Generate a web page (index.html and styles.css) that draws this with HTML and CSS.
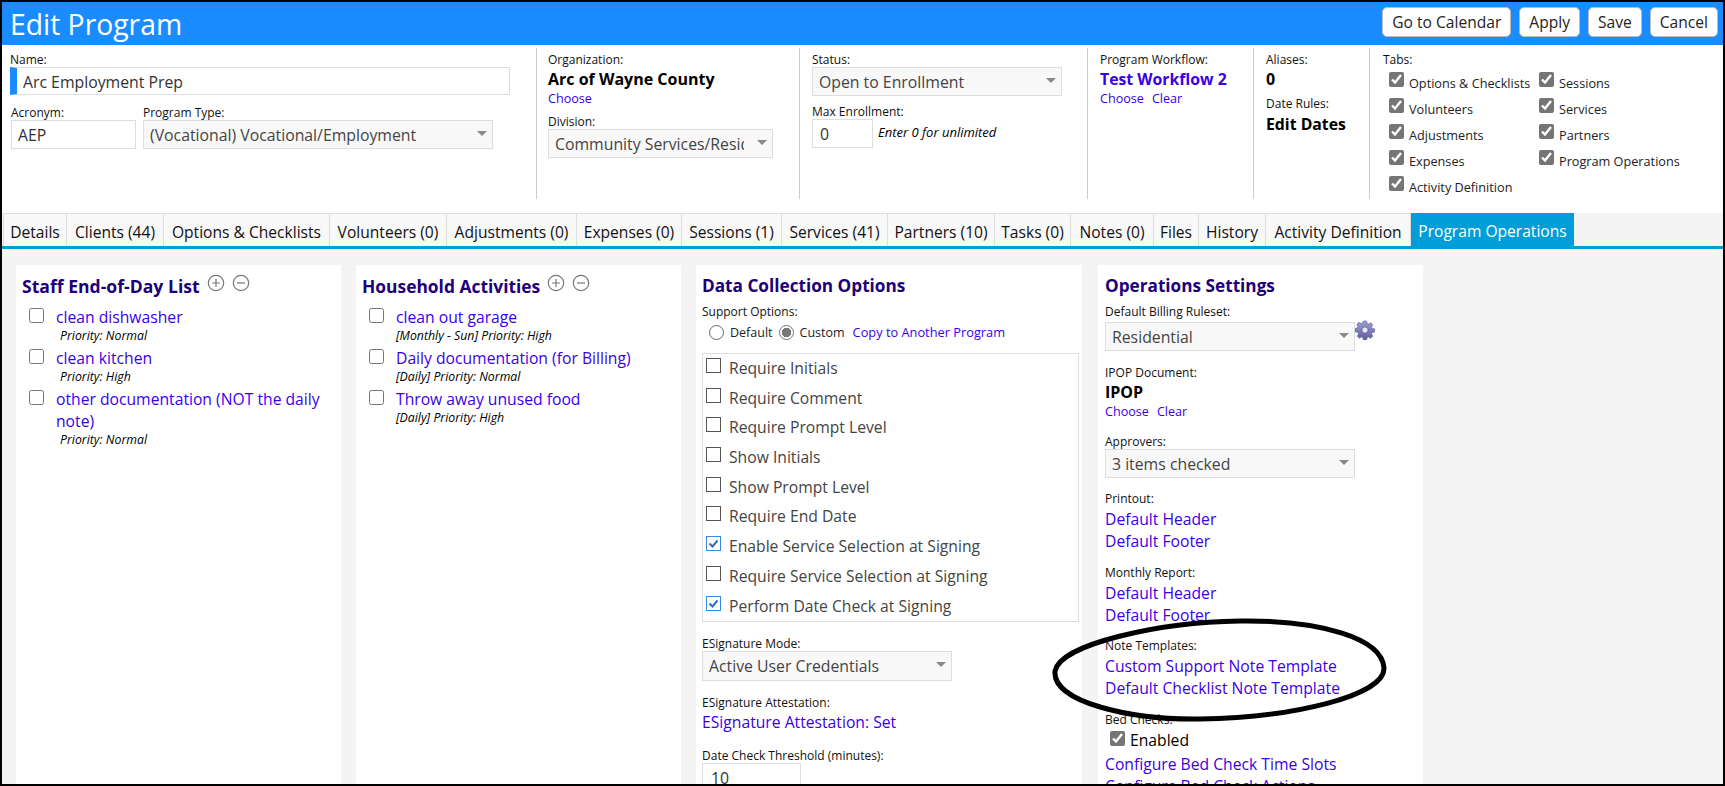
FILE: index.html
```html
<!DOCTYPE html>
<html lang="en">
<head>
    <meta charset="UTF-8">
    <title>Edit Program</title>
    <link rel="stylesheet" href="styles.css">
</head>
<body>
    <div class="frame">
        <div class="titlebar">
            <h1>Edit Program</h1>
            <div class="actions">
                <button>Go to Calendar</button>
                <button>Apply</button>
                <button>Save</button>
                <button>Cancel</button>
            </div>
        </div>

        <div class="form-top">
            <div class="col col-name">
                <label>Name:</label>
                <input type="text" class="input name-input" value="Arc Employment Prep">
                <div class="name-row">
                    <div>
                        <label>Acronym:</label>
                        <input type="text" class="input acronym-input" value="AEP">
                    </div>
                    <div>
                        <label>Program Type:</label>
                        <div class="select type-select"><select><option>(Vocational) Vocational/Employment</option></select></div>
                    </div>
                </div>
            </div>
            <div class="col col-org">
                <label>Organization:</label>
                <div class="strong">Arc of Wayne County</div>
                <div class="small-links"><a>Choose</a></div>
                <label class="mt8">Division:</label>
                <div class="select division-select"><select><option>Community Services/Residential</option></select></div>
            </div>
            <div class="col col-status">
                <label>Status:</label>
                <div class="select status-select"><select><option>Open to Enrollment</option></select></div>
                <label class="mt9">Max Enrollment:</label>
                <div class="enroll-row">
                    <input type="text" class="input enroll-input" value="0">
                    <em>Enter 0 for unlimited</em>
                </div>
            </div>
            <div class="col col-workflow">
                <label>Program Workflow:</label>
                <div class="strong link-strong">Test Workflow 2</div>
                <div class="small-links"><a>Choose</a><a>Clear</a></div>
            </div>
            <div class="col col-alias">
                <label>Aliases:</label>
                <div class="strong">0</div>
                <label class="mt7">Date Rules:</label>
                <div class="strong edit-dates">Edit Dates</div>
            </div>
            <div class="col col-tabs">
                <label>Tabs:</label>
                <div class="tab-checks">
                    <div class="tab-check"><input type="checkbox" checked><span>Options &amp; Checklists</span></div>
                    <div class="tab-check"><input type="checkbox" checked><span>Sessions</span></div>
                    <div class="tab-check"><input type="checkbox" checked><span>Volunteers</span></div>
                    <div class="tab-check"><input type="checkbox" checked><span>Services</span></div>
                    <div class="tab-check"><input type="checkbox" checked><span>Adjustments</span></div>
                    <div class="tab-check"><input type="checkbox" checked><span>Partners</span></div>
                    <div class="tab-check"><input type="checkbox" checked><span>Expenses</span></div>
                    <div class="tab-check"><input type="checkbox" checked><span>Program Operations</span></div>
                    <div class="tab-check"><input type="checkbox" checked><span>Activity Definition</span></div>
                </div>
            </div>
        </div>

        <div class="tabs">
            <a class="tab w-details">Details</a>
            <a class="tab w-clients">Clients (44)</a>
            <a class="tab w-options">Options &amp; Checklists</a>
            <a class="tab w-volunteers">Volunteers (0)</a>
            <a class="tab w-adjust">Adjustments (0)</a>
            <a class="tab w-expenses">Expenses (0)</a>
            <a class="tab w-sessions">Sessions (1)</a>
            <a class="tab w-services">Services (41)</a>
            <a class="tab w-partners">Partners (10)</a>
            <a class="tab w-tasks">Tasks (0)</a>
            <a class="tab w-notes">Notes (0)</a>
            <a class="tab w-files">Files</a>
            <a class="tab w-history">History</a>
            <a class="tab w-activity">Activity Definition</a>
            <a class="tab tab-active">Program Operations</a>
        </div>

        <div class="content">
            <div class="panel panel-list">
                <h2>Staff End-of-Day List
                    <svg class="round-icon" viewBox="0 0 18 18"><circle cx="9" cy="9" r="7.7"/><path d="M9 5v8M5 9h8"/></svg>
                    <svg class="round-icon" viewBox="0 0 18 18"><circle cx="9" cy="9" r="7.7"/><path d="M5 9h8"/></svg>
                </h2>
                <ul class="todo">
                    <li><input type="checkbox"><div><a>clean dishwasher</a><p class="indent">Priority: Normal</p></div></li>
                    <li><input type="checkbox"><div><a>clean kitchen</a><p class="indent">Priority: High</p></div></li>
                    <li><input type="checkbox"><div><a>other documentation (NOT the daily note)</a><p class="indent">Priority: Normal</p></div></li>
                </ul>
            </div>
            <div class="panel panel-list">
                <h2 class="household">Household Activities
                    <svg class="round-icon" viewBox="0 0 18 18"><circle cx="9" cy="9" r="7.7"/><path d="M9 5v8M5 9h8"/></svg>
                    <svg class="round-icon" viewBox="0 0 18 18"><circle cx="9" cy="9" r="7.7"/><path d="M5 9h8"/></svg>
                </h2>
                <ul class="todo">
                    <li><input type="checkbox"><div><a>clean out garage</a><p>[Monthly - Sun] Priority: High</p></div></li>
                    <li><input type="checkbox"><div><a>Daily documentation (for Billing)</a><p>[Daily] Priority: Normal</p></div></li>
                    <li><input type="checkbox"><div><a>Throw away unused food</a><p>[Daily] Priority: High</p></div></li>
                </ul>
            </div>
            <div class="panel panel-data">
                <h2>Data Collection Options</h2>
                <label class="mt7">Support Options:</label>
                <div class="radio-row">
                    <span class="radio"></span><span>Default</span>
                    <span class="radio radio-on"></span><span>Custom</span>
                    <a>Copy to Another Program</a>
                </div>
                <div class="option-box">
                    <div class="option"><span class="square"></span>Require Initials</div>
                    <div class="option"><span class="square"></span>Require Comment</div>
                    <div class="option"><span class="square"></span>Require Prompt Level</div>
                    <div class="option"><span class="square"></span>Show Initials</div>
                    <div class="option"><span class="square"></span>Show Prompt Level</div>
                    <div class="option"><span class="square"></span>Require End Date</div>
                    <div class="option"><span class="square square-on"><svg viewBox="0 0 13 13"><path d="M2.5 6.5l3 3 5-6"/></svg></span>Enable Service Selection at Signing</div>
                    <div class="option"><span class="square"></span>Require Service Selection at Signing</div>
                    <div class="option"><span class="square square-on"><svg viewBox="0 0 13 13"><path d="M2.5 6.5l3 3 5-6"/></svg></span>Perform Date Check at Signing</div>
                </div>
                <label class="mt15">ESignature Mode:</label>
                <div class="select mode-select"><select><option>Active User Credentials</option></select></div>
                <label class="mt15">ESignature Attestation:</label>
                <a class="big-link mt1">ESignature Attestation: Set</a>
                <label class="mt16">Date Check Threshold (minutes):</label>
                <input type="text" class="input threshold-input" value="10">
            </div>
            <div class="panel panel-settings">
                <h2>Operations Settings</h2>
                <label class="mt7">Default Billing Ruleset:</label>
                <div class="billing-row">
                    <div class="select settings-select"><select><option>Residential</option></select></div>
                    <svg class="gear" viewBox="0 0 20 20">
                        <defs><linearGradient id="gearFill" x1="0" y1="0" x2="0" y2="1"><stop offset="0" stop-color="#9f9fd6"/><stop offset="1" stop-color="#5d5d9c"/></linearGradient></defs>
                        <path fill="url(#gearFill)" stroke="#55558f" stroke-width=".6" d="M8.4 1h3.2l.4 2.4 1.6.7 2-1.4 2.2 2.2-1.4 2 .7 1.6 2.4.4v3.2l-2.4.4-.7 1.6 1.4 2-2.2 2.2-2-1.4-1.6.7-.4 2.4H8.4l-.4-2.4-1.6-.7-2 1.4-2.2-2.2 1.4-2-.7-1.6L0 11.6V8.4l2.4-.4.7-1.6-1.4-2 2.2-2.2 2 1.4 1.6-.7z"/>
                        <circle cx="10" cy="10" r="3.2" fill="#e6e6f5" stroke="#55558f" stroke-width=".8"/>
                    </svg>
                </div>
                <label class="mt15">IPOP Document:</label>
                <div class="strong mt2">IPOP</div>
                <div class="small-links"><a>Choose</a><a>Clear</a></div>
                <label class="mt15">Approvers:</label>
                <div class="select settings-select"><select><option>3 items checked</option></select></div>
                <label class="mt14">Printout:</label>
                <a class="big-link mt2">Default Header</a>
                <a class="big-link">Default Footer</a>
                <label class="mt14">Monthly Report:</label>
                <a class="big-link mt2">Default Header</a>
                <a class="big-link">Default Footer</a>
                <label class="mt13">Note Templates:</label>
                <a class="big-link mt2">Custom Support Note Template</a>
                <a class="big-link">Default Checklist Note Template</a>
                <label class="mt14">Bed Checks:</label>
                <div class="enabled-row"><input type="checkbox" checked><span>Enabled</span></div>
                <a class="big-link mt2">Configure Bed Check Time Slots</a>
                <a class="big-link">Configure Bed Check Actions</a>
            </div>
        </div>

        <!-- hand drawn marker from the screenshot -->
        <svg class="marker" viewBox="0 0 340 110">
            <path d="M5 53C10 26 110 4 190 3C270 2 332 20 334 50C335 78 240 100 150 101C80 102 2 84 5 53Z"/>
        </svg>
    </div>
</body>
</html>
```

FILE: styles.css
```css
* {
    margin: 0;
    padding: 0;
    box-sizing: border-box;
}

body {
    font-family: 'Open Sans', 'Noto Sans', sans-serif;
    font-stretch: 90%;
    color: #000;
    background: #000;
}

.frame {
    position: relative;
    width: 1725px;
    height: 786px;
    border: 2px solid #000;
    overflow: hidden;
    background: #f4f4f4;
}

label {
    display: block;
    font-size: 12px;
    line-height: 14px;
    color: #111;
}

a {
    color: #3a00e8;
}

input[type="checkbox"] {
    accent-color: #757575;
}

.mt1 { margin-top: 1px; }
.mt2 { margin-top: 2px; }
.mt7 { margin-top: 7px; }
.mt8 { margin-top: 8px; }
.mt9 { margin-top: 9px; }
.mt13 { margin-top: 13px; }
.mt14 { margin-top: 14px; }
.mt15 { margin-top: 15px; }
.mt16 { margin-top: 16px; }

/* title */
.titlebar {
    height: 43px;
    background: #1a8cff;
    display: flex;
    justify-content: space-between;
    padding: 5px 5px 0 8px;
}

.titlebar h1 {
    font-size: 28.3px;
    line-height: 34px;
    font-weight: 400;
    color: #fff;
}

.actions {
    display: flex;
    gap: 8px;
}

.actions button {
    height: 30px;
    padding: 0 9px;
    font-family: inherit;
    font-stretch: 90%;
    font-size: 15.6px;
    color: #222;
    background: #fff;
    border: 1px solid #bbb;
    border-radius: 5px;
}

/* program fields */
.form-top {
    height: 168px;
    background: #fff;
    display: flex;
    padding: 3px 0 14px;
}

.col {
    padding: 5px 0 0 12px;
    border-right: 1px solid #ccc;
}

.col-name { width: 535px; padding-left: 8px; }
.col-org { width: 263px; padding-left: 11px; }
.col-status { width: 288px; }
.col-workflow { width: 166px; }
.col-alias { width: 116px; }
.col-tabs { border-right: 0; padding-left: 13px; flex: 1; }

.input {
    display: block;
    height: 29px;
    padding: 0 6px;
    font-family: inherit;
    font-stretch: 90%;
    font-size: 15.8px;
    color: #333;
    background: #fff;
    border: 1px solid #ddd;
}

.name-input {
    width: 500px;
    height: 28px;
    padding: 2px 0 0 6px;
    border-left: 7px solid #1a8cff;
}

.name-row {
    display: flex;
    gap: 7px;
    margin: 11px 0 0 1px;
}

.acronym-input { width: 125px; }
.enroll-input { width: 61px; padding-left: 7px; }

.select {
    position: relative;
    height: 29px;
}

.select select {
    display: block;
    appearance: none;
    width: 100%;
    height: 100%;
    padding: 0 28px 0 6px;
    font-family: inherit;
    font-stretch: 90%;
    font-size: 15.8px;
    color: #444;
    background: #f8f8f8;
    border: 1px solid #ddd;
    border-radius: 0;
}

.select::after {
    content: "";
    position: absolute;
    right: 6px;
    top: 11px;
    border: 5px solid transparent;
    border-top: 5px solid #888;
    border-bottom: 0;
}

.type-select { width: 350px; }
.division-select { width: 225px; }
.status-select { width: 250px; }
.mode-select { width: 250px; height: 30px; }
.settings-select { width: 250px; }

.strong {
    font-size: 16px;
    line-height: 22px;
    font-weight: 700;
    margin-top: 1px;
}

.link-strong { color: #3a00e8; font-size: 15.8px; }
.edit-dates { margin-top: 2px; font-size: 15.8px; }

.small-links {
    display: flex;
    gap: 8px;
    font-size: 12.6px;
    line-height: 16px;
    margin-top: 1px;
}

.enroll-row {
    display: flex;
    gap: 5px;
}

.enroll-row em {
    font-size: 13px;
    line-height: 26px;
}

.tab-checks {
    display: grid;
    grid-template-columns: 150px 1fr;
    grid-auto-rows: 26px;
    margin: 3px 0 0 6px;
}

.tab-check {
    display: flex;
    gap: 5px;
    font-size: 12.7px;
    line-height: 26px;
    color: #222;
    white-space: nowrap;
}

.tab-check input,
.enabled-row input {
    width: 15px;
    height: 15px;
    margin-top: 2px;
}

/* tab strip */
.tabs {
    height: 36px;
    background: #f4f4f4;
    display: flex;
    padding-left: 1px;
    border-bottom: 3px solid #009ed8;
}

.tab {
    display: block;
    height: 33px;
    font-size: 15.6px;
    line-height: 36px;
    color: #111;
    background: #f8f8f8;
    border: 1px solid #ddd;
    border-width: 1px 1px 0 0;
    text-align: center;
    white-space: nowrap;
}

.tab:first-child { border-left-width: 1px; }
.w-details { width: 64px; }
.w-clients { width: 97px; }
.w-options { width: 166px; }
.w-volunteers { width: 117px; }
.w-adjust { width: 130px; }
.w-expenses { width: 105px; }
.w-sessions { width: 100px; }
.w-services { width: 106px; }
.w-partners { width: 107px; }
.w-tasks { width: 76px; }
.w-notes { width: 83px; }
.w-files { width: 45px; }
.w-history { width: 67px; }
.w-activity { width: 145px; }

.tab-active {
    width: 163px;
    color: #fff;
    background: #009ed8;
    border: 0;
}

/* panels */
.content {
    display: flex;
    padding: 16px 0 0 14px;
}

.panel {
    height: 540px;
    padding: 9px 7px 0;
    background: #fff;
    overflow: hidden;
}

.panel-list { width: 325px; margin-right: 15px; padding-left: 6px; }
.panel-data { width: 386px; margin-right: 16px; padding: 9px 3px 0 6px; }
.panel-settings { width: 325px; }

.panel h2 {
    display: flex;
    align-items: center;
    height: 24px;
    font-size: 17.2px;
    line-height: 24px;
    font-weight: 700;
    color: #1d0077;
}

.panel-list h2 {
    font-size: 17.6px;
}

.panel-list h2.household {
    font-size: 17.4px;
}

.round-icon {
    flex: none;
    width: 18px;
    height: 18px;
    margin: -7px 0 0 7px;
    fill: none;
    stroke: #777;
    stroke-width: 1.2;
}

.todo {
    list-style: none;
    margin-top: 8px;
}

.todo li {
    display: flex;
    gap: 12px;
    margin-bottom: 3px;
    padding-left: 7px;
}

.todo input {
    flex: none;
    width: 15px;
    height: 15px;
    margin-top: 2px;
}

.todo a {
    display: block;
    font-size: 15.7px;
    line-height: 22px;
}

.todo p {
    font-size: 12.3px;
    line-height: 16px;
    font-style: italic;
}

.todo p.indent { padding-left: 4px; }

.radio-row {
    display: flex;
    align-items: center;
    height: 20px;
    margin-top: 3px;
    padding-left: 7px;
    font-size: 12.5px;
    color: #222;
}

.radio {
    width: 15px;
    height: 15px;
    margin-right: 6px;
    border: 1px solid #666;
    border-radius: 50%;
    background: #fff;
}

.radio + span { margin-right: 6px; }

.radio-on {
    background: radial-gradient(circle, #777 0 4.5px, #fff 5px);
    border-color: #777;
}

.radio-row a {
    margin-left: 2px;
    font-size: 12.8px;
}

.option-box {
    height: 269px;
    margin-top: 11px;
    border: 1px solid #ddd;
}

.option {
    position: relative;
    height: 29.7px;
    padding-left: 26px;
    font-size: 15.7px;
    line-height: 29px;
    color: #444;
}

.square {
    position: absolute;
    left: 3px;
    top: 4px;
    width: 15px;
    height: 15px;
    border: 1px solid #555;
}

.square-on {
    border-color: #3a8be0;
}

.square svg {
    display: block;
    width: 13px;
    height: 13px;
    fill: none;
    stroke: #2b6fc0;
    stroke-width: 2;
}

.big-link {
    display: block;
    font-size: 15.7px;
    line-height: 22px;
}

.threshold-input {
    width: 99px;
    padding-left: 8px;
}

.billing-row {
    display: flex;
    align-items: flex-start;
    margin-top: 3px;
}

.gear {
    width: 20px;
    height: 20px;
    margin-top: -2px;
}

.enabled-row {
    display: flex;
    gap: 5px;
    height: 22px;
    padding-left: 5px;
    margin-top: 2px;
    font-size: 15.7px;
    line-height: 22px;
}

.marker {
    position: absolute;
    left: 1048px;
    top: 616px;
    width: 340px;
    height: 110px;
    fill: none;
    stroke: #000;
    stroke-width: 5;
}
```
